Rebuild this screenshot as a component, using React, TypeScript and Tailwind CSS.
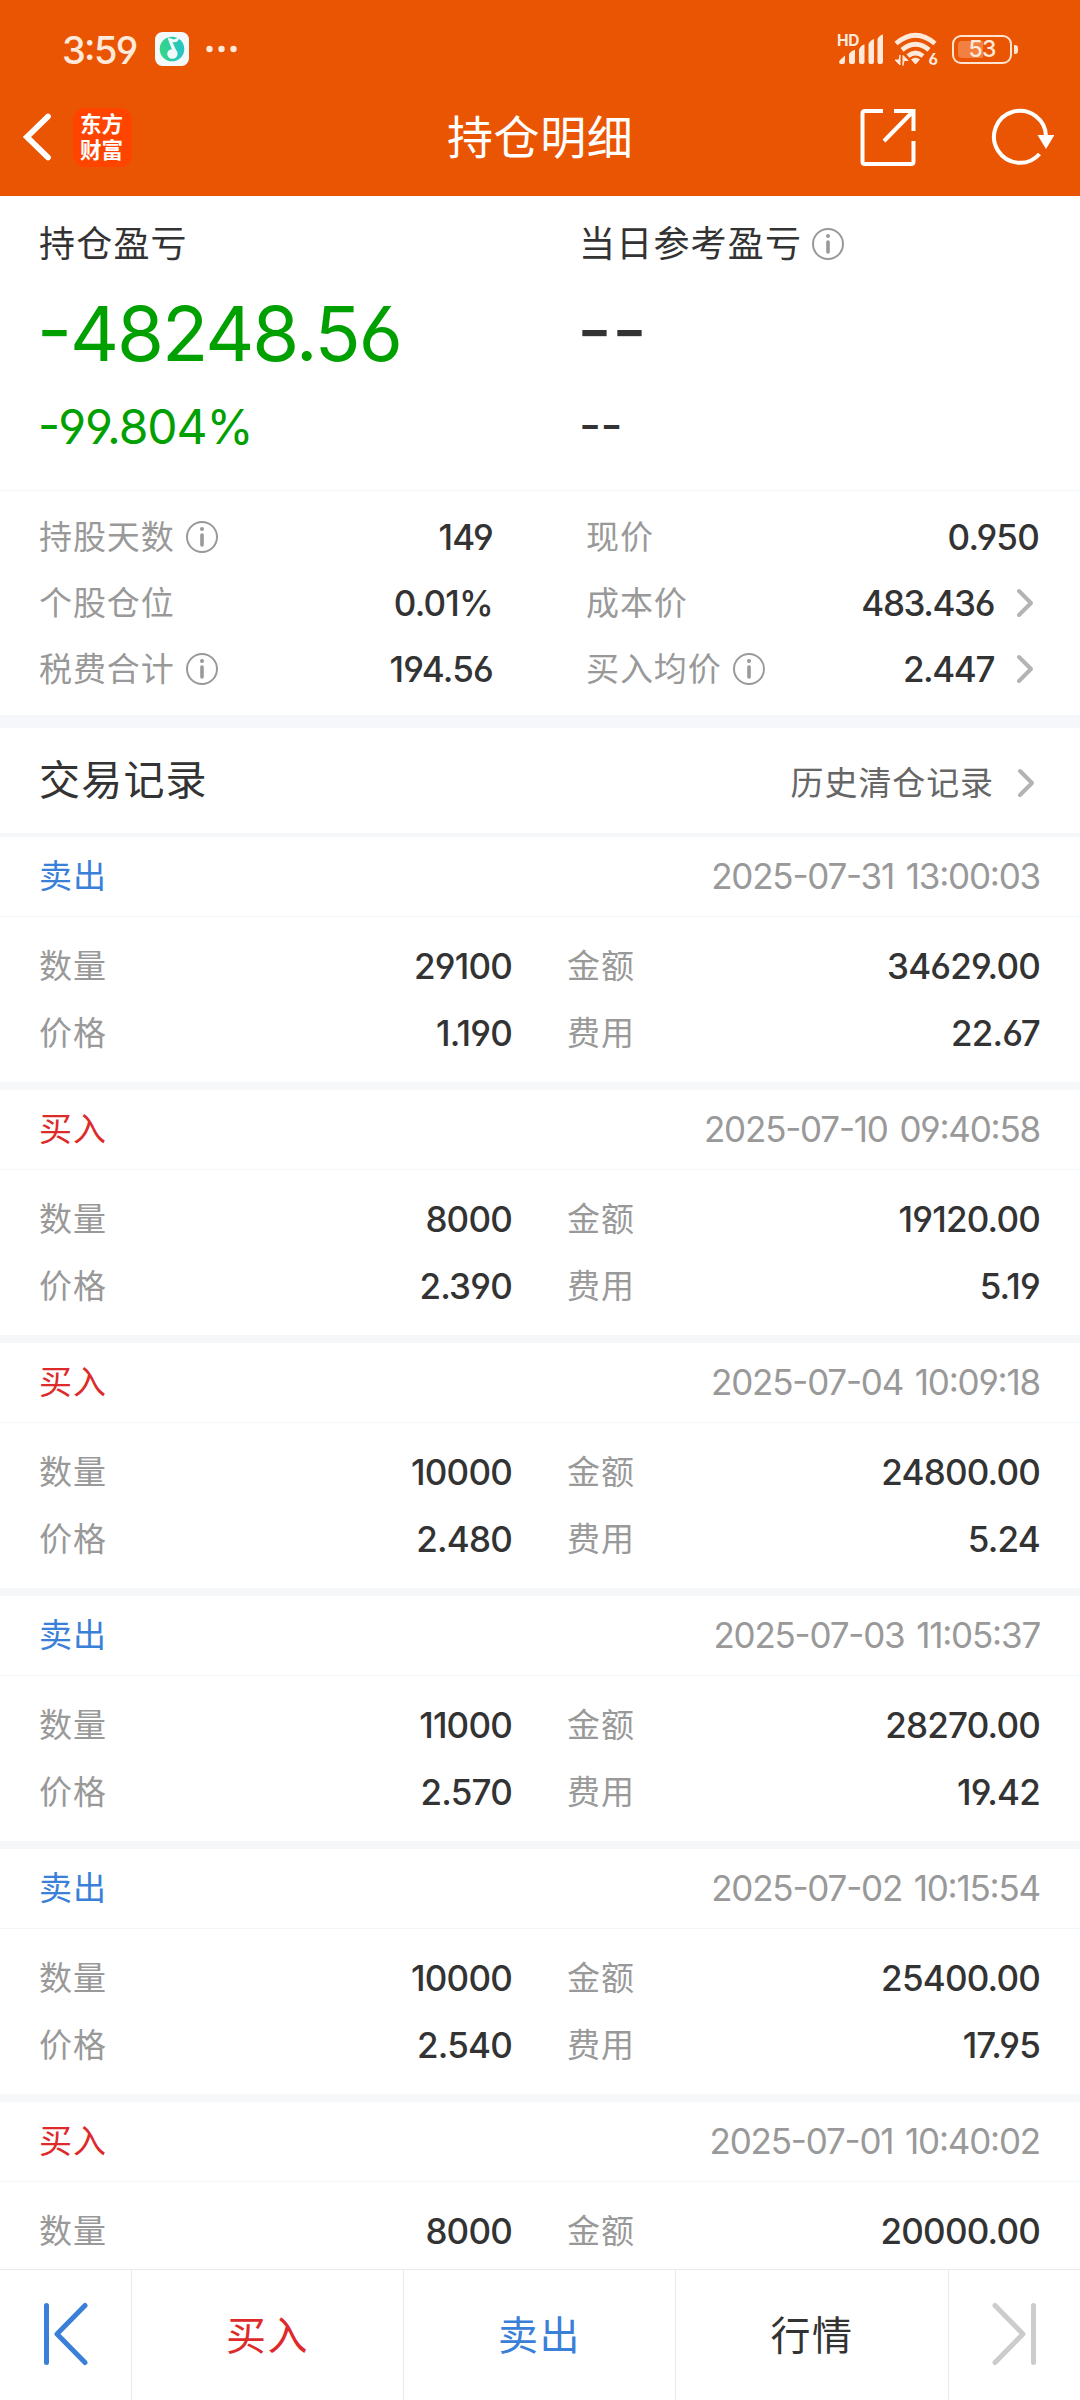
import React from "react";

type Trade = {
  side: "买入" | "卖出";
  time: string;
  quantity: string;
  amount: string;
  price?: string;
  fee?: string;
};

const trades: Trade[] = [
  { side: "卖出", time: "2025-07-31 13:00:03", quantity: "29100", price: "1.190", amount: "34629.00", fee: "22.67" },
  { side: "买入", time: "2025-07-10 09:40:58", quantity: "8000", price: "2.390", amount: "19120.00", fee: "5.19" },
  { side: "买入", time: "2025-07-04 10:09:18", quantity: "10000", price: "2.480", amount: "24800.00", fee: "5.24" },
  { side: "卖出", time: "2025-07-03 11:05:37", quantity: "11000", price: "2.570", amount: "28270.00", fee: "19.42" },
  { side: "卖出", time: "2025-07-02 10:15:54", quantity: "10000", price: "2.540", amount: "25400.00", fee: "17.95" },
  { side: "买入", time: "2025-07-01 10:40:02", quantity: "8000", amount: "20000.00" },
];

function InfoIcon({ className = "" }: { className?: string }) {
  return (
    <svg className={`shrink-0 text-[#999] ${className}`} width="32" height="32" viewBox="0 0 32 32" fill="none" stroke="currentColor">
      <circle cx="16" cy="16" r="15" strokeWidth="2" />
      <circle cx="16" cy="8" r="2" fill="currentColor" stroke="none" />
      <path d="M16 14v10" strokeWidth="3.6" strokeLinecap="round" />
    </svg>
  );
}

function Chevron() {
  return (
    <svg className="shrink-0 text-[#b3b3b3]" width="18" height="30" viewBox="0 0 18 30" fill="none" stroke="currentColor" strokeWidth="4" strokeLinecap="round" strokeLinejoin="round">
      <path d="M3 3l12 12L3 27" />
    </svg>
  );
}

function StatusBar() {
  return (
    <div className="flex h-[98px] items-center pl-[62px] text-[#ffe9db]">
      <span className="w-[93px] pt-[2px] text-[38px] font-medium leading-none tracking-[-1.7px]">3:59</span>
      <svg width="34" height="34" viewBox="0 0 34 34">
        <defs>
          <linearGradient id="note" x1="0" x2="1">
            <stop offset="0" stopColor="#35d684" />
            <stop offset="1" stopColor="#25c4c9" />
          </linearGradient>
        </defs>
        <rect width="34" height="34" rx="7.5" fill="#f3f8fa" />
        <circle cx="17" cy="17" r="12.3" fill="url(#note)" />
        <ellipse cx="17.4" cy="22" rx="5.2" ry="4.8" fill="#f3f8fa" />
        <path d="M12.600 5.500l6.400 1.900 5-2.200c0 3.200-1.600 4.800-5 5.100h-1.500l5 11-3.600 1-4.600-11.600z" fill="#f3f8fa" />
      </svg>
      <svg className="ml-[17px]" width="32" height="8" viewBox="0 0 32 8" fill="currentColor">
        <circle cx="3.5" cy="4" r="3.2" />
        <circle cx="15.5" cy="4" r="3.2" />
        <circle cx="27.5" cy="4" r="3.2" />
      </svg>
      <div className="ml-auto mr-[62px] flex items-center">
        <svg width="48" height="34" viewBox="0 0 48 34" fill="currentColor">
          <text x="0" y="13.6" fontFamily="Inter, sans-serif" fontSize="15.5" fontWeight="700" textLength="22.5">HD</text>
          <path d="M3 28l5-4.500V30q0 2-2 2H4q-2 0-2-2zM12 22q3-4 6-4v12q0 2-2 2h-2q-2 0-2-2zM22 17.500q2-4.500 5.500-5v17.500q0 2-2 2h-1.500q-2 0-2-2zM31.500 12q2-4 5.500-5v23q0 2-2 2h-1.500q-2 0-2-2zM40.500 7q2-4 5.500-4.500v27.500q0 2-2 2h-1.500q-2 0-2-2z" />
        </svg>
        <svg className="ml-[9px]" width="46" height="36" viewBox="0 0 46 36" fill="none" stroke="currentColor" strokeWidth="4.800">
          <path d="M2 12.500q19.500-16.500 39 0M8 18.800q13.500-11 27 0M14 25q7.500-6 15 0" />
          <path d="M17.500 28.500q4-3 8 0l-4 4.500z" fill="currentColor" strokeWidth="1" />
          <path d="M6 24v10l-5-5h4zM9 34.500v-10l5 5h-4z" fill="currentColor" strokeWidth="1" />
          <text x="34.500" y="33.500" fill="currentColor" stroke="none" fontFamily="Inter, sans-serif" fontSize="15.5" fontWeight="700">6</text>
        </svg>
        <div className="relative ml-[12px] mr-[2px] flex h-[29px] w-[60px] items-center justify-center rounded-[9px] border-[2.5px] border-[#ffe4d2]">
          <span className="absolute left-[4px] top-[4px] h-[17px] w-[25px] rounded-l-[4px] bg-[#f28040]" />
          <span className="relative text-[23px] font-medium leading-none tracking-[-0.8px]">53</span>
        </div>
        <span className="h-[9px] w-[4px] rounded-r-[3px] bg-[#ffe4d2]" />
      </div>
    </div>
  );
}

function NavBar() {
  return (
    <div className="flex h-[98px] items-center pb-[20px] text-white">
      <div className="flex w-[447px] items-center pl-[22px]">
        <svg width="30" height="50" viewBox="0 0 30 50" fill="none" stroke="currentColor" strokeWidth="5.800" strokeLinecap="round" strokeLinejoin="miter">
          <path d="M26 4.500L5 25l21 20.500" />
        </svg>
        <div className="ml-[21px] flex h-[59px] w-[59px] flex-col items-center justify-center rounded-[12px] bg-[#ff4400] pb-[3px] pr-[2px] font-['Noto_Sans_CJK_SC'] text-[21.5px] font-bold leading-[25.5px]">
          <span>东方</span>
          <span>财富</span>
        </div>
      </div>
      <h1 className="whitespace-nowrap text-[46px] leading-none tracking-[0.6px]">持仓明细</h1>
      <div className="ml-auto flex items-center">
        <svg width="60" height="60" viewBox="0 0 60 60" fill="none" stroke="currentColor" strokeWidth="4">
          <path d="M26 4H8Q5.500 4 5.500 6.500V54.500Q5.500 57 8 57H54Q56.500 57 56.500 54.500V34M37 4H56.500V24M27 34L56 4.500" />
        </svg>
        <svg className="ml-[69px] mr-[26px]" width="68" height="60" viewBox="0 0 68 60" fill="none" stroke="currentColor" strokeWidth="4">
          <path d="M60 30A26 26 0 1 0 53.500 47" />
          <path d="M51.500 28h17L60 42z" fill="currentColor" stroke="none" />
        </svg>
      </div>
    </div>
  );
}

function Summary() {
  return (
    <section className="flex h-[294px] shrink-0">
      <div className="w-[540px] pl-[39px] text-[#00a000]">
        <div className="flex h-[95px] items-center text-[36px] leading-none tracking-[1.2px] text-[#333]">持仓盈亏</div>
        <div className="-ml-[2px] flex h-[83px] items-center text-[76px] leading-none tracking-[-2px]">-48248.56</div>
        <div className="-ml-[1px] flex h-[105px] items-center text-[48px] leading-none tracking-[-1.1px]">-99.804%</div>
      </div>
      <div className="flex-1 pl-[39px] text-[#333]">
        <div className="flex h-[95px] items-center text-[36px] leading-none tracking-[1.2px]">
          当日参考盈亏
          <InfoIcon className="ml-[10px]" />
        </div>
        <div className="-ml-[2px] flex h-[83px] items-center text-[76px] leading-none">--</div>
        <div className="flex h-[105px] items-center text-[48px] leading-none tracking-[-0.5px]">--</div>
      </div>
    </section>
  );
}

function Metric({ label, value, info = false, link = false }: { label: string; value: string; info?: boolean; link?: boolean }) {
  return (
    <div className="flex h-[66px] items-center leading-none">
      <span className="text-[33px] tracking-[0.9px] text-[#999]">{label}</span>
      {info && <InfoIcon className="ml-[11px]" />}
      <span className={`ml-auto text-[35px] font-[450] ${link ? "tracking-[-1.4px]" : "tracking-[-0.8px]"}`}>{value}</span>
      {link && (
        <span className="ml-[22px] mr-[5px] flex">
          <Chevron />
        </span>
      )}
    </div>
  );
}

function Metrics() {
  return (
    <section className="flex h-[225px] shrink-0 border-t border-[#f5f6f8] pt-[13px] text-[#333]">
      <div className="w-[493px] pl-[39px]">
        <Metric label="持股天数" value="149" info />
        <Metric label="个股仓位" value="0.01%" />
        <Metric label="税费合计" value="194.56" info />
      </div>
      <div className="ml-[93px] w-[453px]">
        <Metric label="现价" value="0.950" />
        <Metric label="成本价" value="483.436" link />
        <Metric label="买入均价" value="2.447" info link />
      </div>
    </section>
  );
}

function Field({ label, value }: { label: string; value: string }) {
  return (
    <div className="flex h-[67px] items-center justify-between leading-none">
      <span className="text-[33px] tracking-[0.9px] text-[#999]">{label}</span>
      <span className="text-[35px] font-[450] tracking-[-0.8px] text-[#333]">{value}</span>
    </div>
  );
}

function TradeCard({ trade }: { trade: Trade }) {
  return (
    <article className="h-[253px] border-b-8 border-[#f6f7f9]">
      <header className="flex h-[80px] items-center justify-between border-b border-[#f5f6f8] pl-[39px] pr-[40px] leading-none">
        <span className={`text-[33px] tracking-[0.9px] ${trade.side === "买入" ? "text-[#dd2a2a]" : "text-[#3a80d8]"}`}>{trade.side}</span>
        <time className="text-[35px] tracking-[-1.2px] [word-spacing:3px] text-[#999]">{trade.time}</time>
      </header>
      <div className="flex pt-[16px]">
        <div className="mr-[55px] w-[512px] pl-[39px]">
          <Field label="数量" value={trade.quantity} />
          {trade.price && <Field label="价格" value={trade.price} />}
        </div>
        <div className="flex-1 pr-[40px]">
          <Field label="金额" value={trade.amount} />
          {trade.fee && <Field label="费用" value={trade.fee} />}
        </div>
      </div>
    </article>
  );
}

function BottomBar() {
  return (
    <nav className="flex h-[131px] shrink-0 border-t border-[#eaeaea] bg-white text-[40px] leading-none tracking-[1.4px]">
      <button className="flex w-[132px] items-center border-r border-[#eaeaea] pb-[3px] pl-[43px] text-[#3a80d8]">
        <svg width="46" height="64" viewBox="0 0 46 64" fill="none" stroke="currentColor" strokeWidth="5" strokeLinecap="round" strokeLinejoin="round">
          <path d="M3.500 3.500v57M42 3.500L14 32l28 28.500" />
        </svg>
      </button>
      <button className="w-[272px] border-r border-[#eaeaea] pt-[1px] text-[#dd2a2a]">买入</button>
      <button className="w-[272px] border-r border-[#eaeaea] pt-[1px] text-[#3a80d8]">卖出</button>
      <button className="w-[273px] border-r border-[#eaeaea] pt-[1px] text-[#333]">行情</button>
      <button className="flex flex-1 items-center justify-end pb-[3px] pr-[43px] text-[#ccc]">
        <svg width="46" height="64" viewBox="0 0 46 64" fill="none" stroke="currentColor" strokeWidth="5" strokeLinecap="round" strokeLinejoin="round">
          <path d="M42.500 3.500v57M4 3.500L32 32L4 60.500" />
        </svg>
      </button>
    </nav>
  );
}

export default function App() {
  return (
    <div className="flex h-[2400px] w-[1080px] flex-col overflow-hidden bg-white font-['Inter','Noto_Sans_CJK_SC',sans-serif] [font-feature-settings:'cv03','cv04','case']">
      <div className="h-[196px] shrink-0 bg-[#ea5504]">
        <StatusBar />
        <NavBar />
      </div>
      <Summary />
      <Metrics />
      <div className="h-[13px] shrink-0 bg-[#f6f7fa]" />
      <div className="flex h-[109px] shrink-0 items-center justify-between border-b-4 border-[#f5f7f9] pl-[39px] pr-[45px] leading-none">
        <h2 className="text-[41px] tracking-[1.2px] text-[#333]">交易记录</h2>
        <span className="flex items-center gap-[23px] pt-[5px] text-[33px] tracking-[0.9px] text-[#666]">
          历史清仓记录
          <Chevron />
        </span>
      </div>
      <main className="min-h-0 flex-1 overflow-hidden">
        {trades.map((trade) => (
          <TradeCard key={trade.time} trade={trade} />
        ))}
      </main>
      <BottomBar />
    </div>
  );
}
